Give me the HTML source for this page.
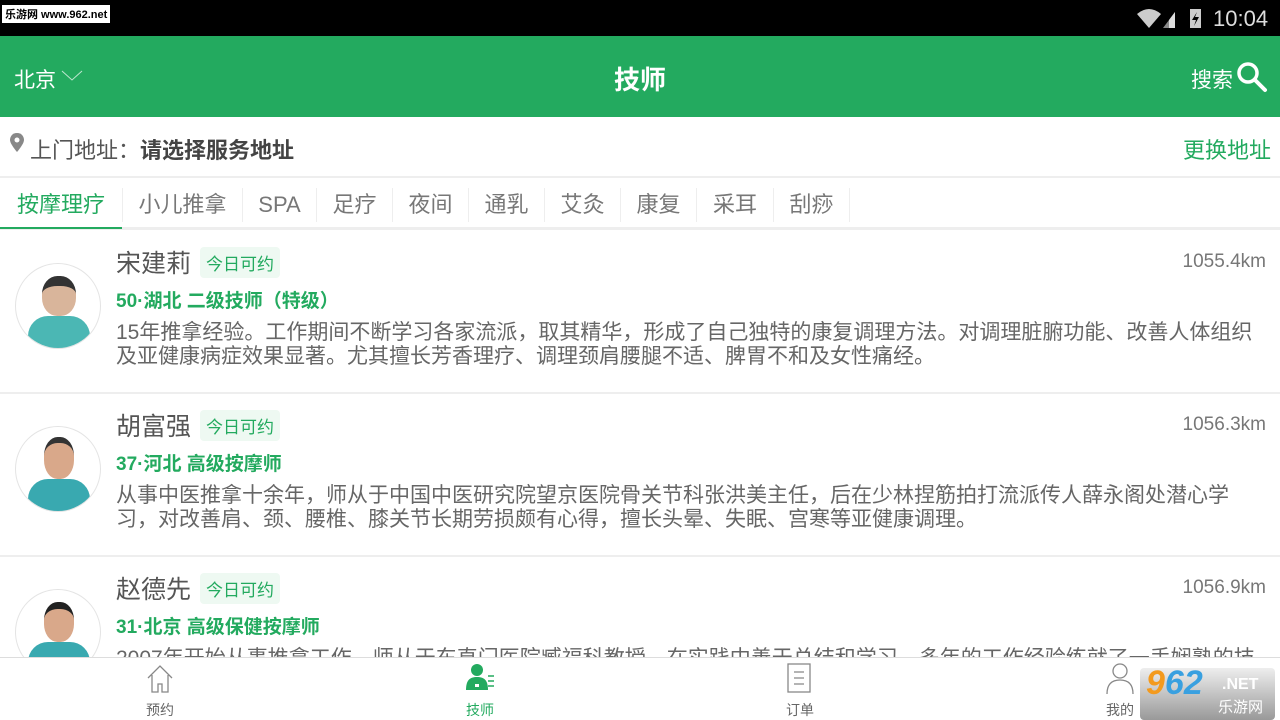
<!DOCTYPE html>
<html><head><meta charset="utf-8"><style>
*{margin:0;padding:0;box-sizing:border-box}
body{width:1280px;height:720px;overflow:hidden;background:#fff;font-family:"Liberation Sans","Noto Sans CJK SC",sans-serif;position:relative}
.sb{position:absolute;top:0;left:0;width:1280px;height:36px;background:#000;color:#fff}
.hd{position:absolute;top:36px;left:0;width:1280px;height:81px;background:#23aa5f;color:#fff}
.addr{position:absolute;top:117px;left:0;width:1280px;height:61px;border-bottom:2px solid #eee}
.tabs{position:absolute;top:180px;left:0;width:1280px;height:50px;border-bottom:3px solid #eee}
.tab{position:absolute;top:8px;font-size:22px;color:#777;height:34px;line-height:34px;border-right:1px solid #eee;text-align:center}
.item{position:absolute;left:0;width:1280px;height:163px;border-bottom:2px solid #eee;overflow:hidden}
.av{position:absolute;left:15px;top:32px;width:86px;height:86px;border-radius:50%;border:1px solid #e4e4e4;overflow:hidden;background:#fff}
.name{position:absolute;left:116px;top:13px;font-size:25px;color:#555}
.tag{position:absolute;top:16px;font-size:17px;color:#23aa5f;background:#eef9f2;padding:3px 6px;border-radius:4px}
.lvl{position:absolute;left:116px;top:55px;font-size:19px;color:#23aa5f;font-weight:bold}
.desc{position:absolute;left:116px;top:90px;white-space:nowrap;font-size:21px;color:#666;line-height:24px}
.dist{position:absolute;right:14px;top:20px;font-size:19px;color:#777}
.nav{position:absolute;top:657px;left:0;width:1280px;height:63px;background:#fff;border-top:1px solid #ddd}
.ni{position:absolute;top:42px;font-size:14px;color:#666;width:60px;text-align:center}
</style></head><body>
<div class="sb">
<div style="position:absolute;left:2px;top:5px;background:#fff;color:#000;font-size:11px;padding:1px 3px;font-weight:bold">乐游网 www.962.net</div>
<svg style="position:absolute;left:1135px;top:6px" width="75" height="24"><path d="M2 8 Q14 -2 26 8 L14 22Z" fill="#ccc"/><path d="M28 22 L40 22 L40 6Z" fill="#888"/><path d="M34 22 L40 22 L40 6 L34 14Z" fill="#ddd"/><rect x="55" y="3" width="11" height="19" fill="#ccc"/><path d="M62 6 L57 14 L61 14 L59 20 L64 11 L60 11Z" fill="#000"/></svg>
<div style="position:absolute;left:1213px;top:6px;font-size:22px;color:#ddd">10:04</div>
</div>
<div class="hd">
<div style="position:absolute;left:14px;top:28px;font-size:21px">北京</div>
<svg style="position:absolute;left:61px;top:34px" width="22" height="12"><path d="M1 1 L11 10 L21 1" stroke="#fff" stroke-width="1" fill="none" opacity=".7"/></svg>
<div style="position:absolute;left:0;width:1280px;top:24px;text-align:center;font-size:26px;font-weight:bold">技师</div>
<div style="position:absolute;left:1191px;top:28px;font-size:21px">搜索</div>
<svg style="position:absolute;left:1236px;top:25px" width="32" height="32"><circle cx="12" cy="12" r="9" stroke="#fff" stroke-width="3.5" fill="none"/><path d="M19 19 L29 29" stroke="#fff" stroke-width="4" stroke-linecap="round"/></svg>
</div>
<div class="addr">
<svg style="position:absolute;left:9px;top:15px" width="16" height="22"><path d="M8 1 C3 1 1 5 1 8 C1 12 8 20 8 20 C8 20 15 12 15 8 C15 5 13 1 8 1Z" fill="#888"/><circle cx="8" cy="8" r="2.5" fill="#fff"/></svg>
<div style="position:absolute;left:30px;top:16px;font-size:22px;color:#555">上门地址：<b style="color:#444">请选择服务地址</b></div>
<div style="position:absolute;right:9px;top:16px;font-size:22px;color:#23aa5f">更换地址</div>
</div>
<div class="tabs">
<div class="tab" style="left:0;width:123px;color:#23aa5f">按摩理疗</div>
<div style="position:absolute;left:0;top:47px;width:122px;height:2px;background:#23aa5f"></div>
<div class="tab" style="left:123px;width:120px">小儿推拿</div>
<div class="tab" style="left:243px;width:74px">SPA</div>
<div class="tab" style="left:317px;width:76px">足疗</div>
<div class="tab" style="left:393px;width:76px">夜间</div>
<div class="tab" style="left:469px;width:76px">通乳</div>
<div class="tab" style="left:545px;width:76px">艾灸</div>
<div class="tab" style="left:621px;width:76px">康复</div>
<div class="tab" style="left:697px;width:77px">采耳</div>
<div class="tab" style="left:774px;width:76px">刮痧</div>
</div>

<div class="item" style="top:231px">
<div class="av"><div style="position:absolute;left:26px;top:12px;width:34px;height:40px;border-radius:45%;background:#d9b59b;border-top:10px solid #333"></div><div style="position:absolute;left:12px;top:52px;width:62px;height:40px;background:#4bb7b4;border-radius:20px 20px 0 0"></div></div>
<div class="name">宋建莉</div><div class="tag" style="left:200px">今日可约</div>
<div class="lvl">50·湖北 二级技师（特级）</div>
<div class="desc">15年推拿经验。工作期间不断学习各家流派，取其精华，形成了自己独特的康复调理方法。对调理脏腑功能、改善人体组织<br>及亚健康病症效果显著。尤其擅长芳香理疗、调理颈肩腰腿不适、脾胃不和及女性痛经。</div>
<div class="dist">1055.4km</div>
</div>
<div class="item" style="top:394px">
<div class="av"><div style="position:absolute;left:28px;top:10px;width:30px;height:42px;border-radius:45%;background:#d9a88a;border-top:6px solid #333"></div><div style="position:absolute;left:12px;top:52px;width:62px;height:40px;background:#39a9b0;border-radius:20px 20px 0 0"></div></div>
<div class="name">胡富强</div><div class="tag" style="left:200px">今日可约</div>
<div class="lvl">37·河北 高级按摩师</div>
<div class="desc">从事中医推拿十余年，师从于中国中医研究院望京医院骨关节科张洪美主任，后在少林捏筋拍打流派传人薛永阁处潜心学<br>习，对改善肩、颈、腰椎、膝关节长期劳损颇有心得，擅长头晕、失眠、宫寒等亚健康调理。</div>
<div class="dist">1056.3km</div>
</div>
<div class="item" style="top:557px;border:none">
<div class="av"><div style="position:absolute;left:28px;top:12px;width:30px;height:40px;border-radius:45%;background:#d9a88a;border-top:7px solid #222"></div><div style="position:absolute;left:12px;top:52px;width:62px;height:40px;background:#39a9b0;border-radius:20px 20px 0 0"></div></div>
<div class="name">赵德先</div><div class="tag" style="left:200px">今日可约</div>
<div class="lvl">31·北京 高级保健按摩师</div>
<div class="desc">2007年开始从事推拿工作，师从于东直门医院臧福科教授，在实践中善于总结和学习，多年的工作经验练就了一手娴熟的技</div>
<div class="dist">1056.9km</div>
</div>

<div class="nav">
<svg style="position:absolute;left:146px;top:6px" width="28" height="30"><path d="M2 14 L14 2 L26 14 M6 11 V28 H12 V20 H16 V28 H22 V11" stroke="#888" stroke-width="1.3" fill="none"/></svg>
<div class="ni" style="left:130px">预约</div>
<svg style="position:absolute;left:464px;top:4px" width="32" height="32"><circle cx="13" cy="8" r="6" fill="#23aa5f"/><path d="M2 28 C2 18 6 15 13 15 C20 15 24 18 24 28Z" fill="#23aa5f"/><rect x="11" y="22" width="4" height="3" fill="#fff"/><path d="M24 14 H30 M24 19 H30 M24 24 H30" stroke="#23aa5f" stroke-width="1.5"/></svg>
<div class="ni" style="left:450px;color:#23aa5f">技师</div>
<svg style="position:absolute;left:786px;top:4px" width="28" height="34"><rect x="2" y="2" width="22" height="28" stroke="#888" stroke-width="1.3" fill="none"/><path d="M8 10 H18 M8 16 H18 M8 22 H18" stroke="#888" stroke-width="1.3"/></svg>
<div class="ni" style="left:770px">订单</div>
<svg style="position:absolute;left:1104px;top:4px" width="32" height="34"><circle cx="16" cy="9" r="7" stroke="#888" stroke-width="1.3" fill="none"/><path d="M3 32 C3 22 8 18 16 18 C24 18 29 22 29 32" stroke="#888" stroke-width="1.3" fill="none"/></svg>
<div class="ni" style="left:1090px">我的</div>
<div style="position:absolute;left:1140px;top:10px;width:135px;height:52px;background:linear-gradient(#eee,#999);border-radius:4px"></div>
<div style="position:absolute;left:1146px;top:6px;font-size:34px;font-weight:bold;color:#f39a1e;font-style:italic">9<span style="color:#39a0e0">62</span></div>
<div style="position:absolute;left:1222px;top:18px;font-size:16px;color:#fff;font-weight:bold">.NET</div>
<div style="position:absolute;left:1218px;top:38px;font-size:15px;color:#fff">乐游网</div>
</div>
</body></html>
